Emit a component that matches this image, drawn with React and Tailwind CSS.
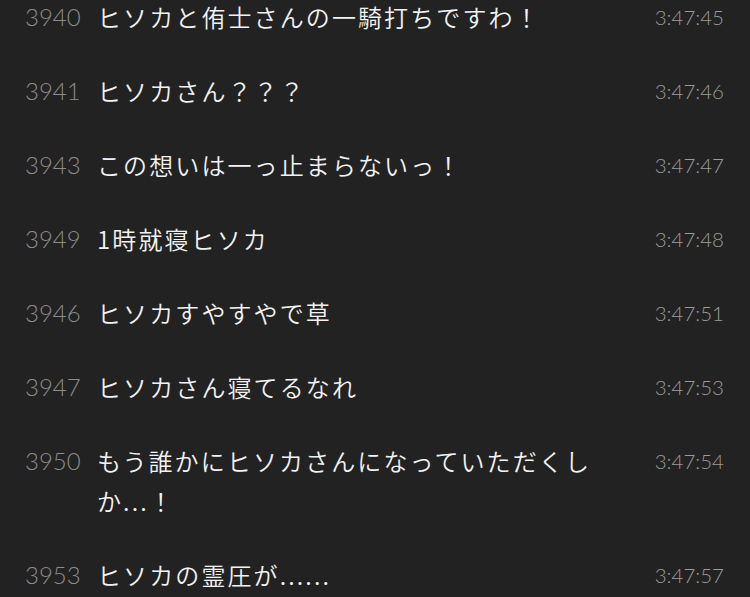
import React from "react";

const rows = [
  ["3940", "ヒソカと侑士さんの一騎打ちですわ！", "3:47:45"],
  ["3941", "ヒソカさん？？？", "3:47:46"],
  ["3943", "この想いは一っ止まらないっ！", "3:47:47"],
  ["3949", "1時就寝ヒソカ", "3:47:48"],
  ["3946", "ヒソカすやすやで草", "3:47:51"],
  ["3947", "ヒソカさん寝てるなれ", "3:47:53"],
  ["3950", "もう誰かにヒソカさんになっていただくしか...！", "3:47:54"],
  ["3953", "ヒソカの霊圧が......", "3:47:57"],
];

export default function App() {
  return (
    <div className="w-[750px] h-[597px] overflow-hidden bg-[#222222]">
      <div className="-mt-[20px] flex flex-col">
        {rows.map(([n, msg, t]) => (
          <div key={n} className="flex items-start py-[17px] pl-[25px] pr-[26px]">
            <div
              className="w-[72px] shrink-0 text-[24px] leading-[40px] font-light text-[#8c8c8c]"
              style={{ fontFamily: "Lato, 'Noto Sans', sans-serif" }}
            >
              {n}
            </div>
            <div
              className="w-[500px] shrink-0 text-[24px] leading-[40px] tracking-[2.1px] font-[350] text-[#f2f2f2]"
              style={{ fontFamily: "'Noto Sans CJK JP', 'Noto Sans', sans-serif" }}
            >
              {msg}
            </div>
            <div
              className="ml-auto text-[20.5px] leading-[40px] font-light text-[#9a9a9a]"
              style={{ fontFamily: "Lato, 'Noto Sans', sans-serif" }}
            >
              {t}
            </div>
          </div>
        ))}
      </div>
    </div>
  );
}
